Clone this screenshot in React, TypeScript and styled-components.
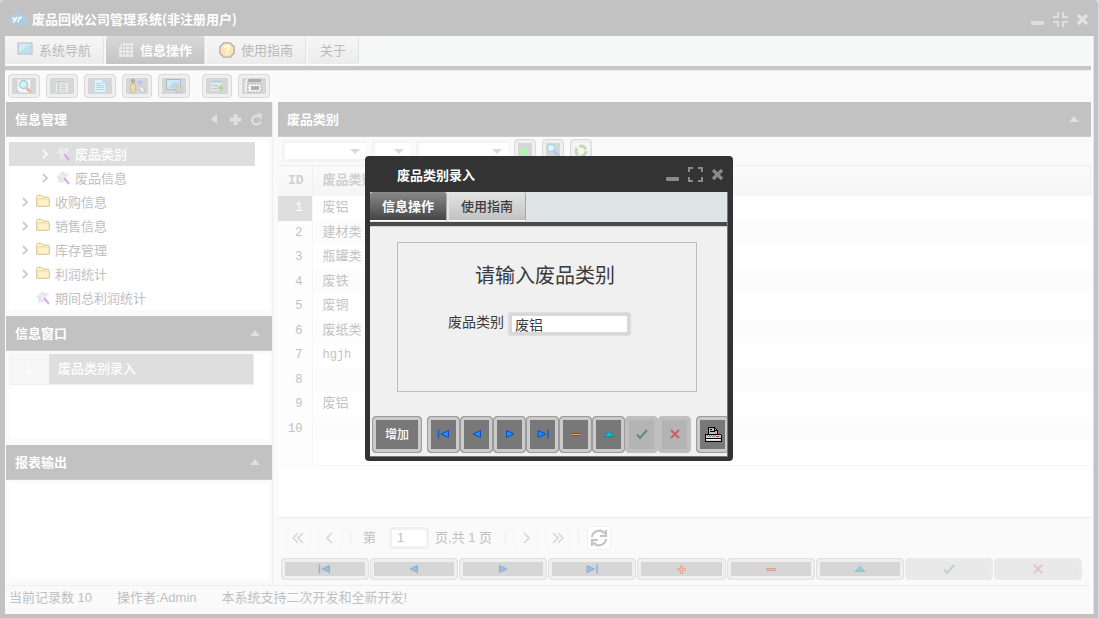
import React from "react";
import styled, { createGlobalStyle, css } from "styled-components";

const uiFont = `"Liberation Sans", "Noto Sans CJK SC", sans-serif`;
const cjkFont = `"Noto Sans CJK SC", sans-serif`;
const gridFont = `"Liberation Mono", "Noto Sans CJK SC", monospace`;

const GlobalStyle = createGlobalStyle`
  * { box-sizing: border-box; }
  body { margin: 0; background: #d3dcea; font: 13px/20px ${uiFont}; color: #c0c0c0; }
  button, input, select { font: inherit; color: inherit; margin: 0; }
  button { cursor: pointer; }
  svg { display: block; flex: none; }
`;

/* ---------- application window ---------- */

const Window = styled.div`
  position: relative;
  display: flex;
  flex-direction: column;
  min-height: 100vh;
  margin-right: 1px;
  padding: 0 4px 4px 5px;
  background: #c2c2c2;
  border-radius: 5px 5px 0 0;
`;

const TitleBar = styled.header`
  display: flex;
  align-items: center;
  height: 36px;
  padding: 2px 5px 0 4px;
  gap: 5px;
`;

const AppTitle = styled.h1`
  flex: 1;
  margin: 0;
  font: bold 13px/20px ${cjkFont};
  color: #fff;
`;

const WindowTools = styled.div`
  display: flex;
  align-items: center;
  gap: 8px;
`;

const ToolButton = styled.button`
  display: flex;
  padding: 0;
  border: 0;
  background: none;
`;

const Client = styled.div`
  flex: 1;
  display: flex;
  flex-direction: column;
  padding-right: 2px;
  border-right: 1px solid #e4e4e4;
  background: #fafafa;
`;

const TabBar = styled.nav<{ $modal?: boolean }>`
  display: flex;
  gap: 2px;
  height: 34px;
  background: ${(p) => (p.$modal ? "#dfe5e5" : "#f5f8f7")};
  border-bottom: 4px solid ${(p) => (p.$modal ? "#4a4a4a" : "#c7c7c7")};
  box-shadow: 0 1px 0 ${(p) => (p.$modal ? "#cfcfcf" : "#ededed")};
`;

const Tab = styled.button<{ $active?: boolean; $modal?: boolean }>`
  display: flex;
  align-items: center;
  gap: 6px;
  height: 29px;
  padding: 0 12px;
  border: 0;
  border-right: 1px solid ${(p) => (p.$modal ? "#a8a8a8" : "#e2e2e2")};
  border-bottom: 1px solid #fff;
  border-radius: 3px 3px 0 0;
  font: ${(p) => (p.$active ? "bold" : p.$modal ? "500" : "normal")} 13px/20px ${cjkFont};
  ${(p) =>
    p.$modal
      ? p.$active
        ? css`background: linear-gradient(#8a8a8a, #454545); color: #fff;`
        : css`background: linear-gradient(#e4e4e4, #c2c2c2); color: #3c3c3c;`
      : p.$active
        ? css`background: linear-gradient(#d8d8d8, #c4c4c4); color: #fff;`
        : css`background: linear-gradient(#f6f6f6, #ececec); color: #b9b9b9;`}
`;

const ToolBar = styled.div`
  display: flex;
  gap: 12px;
  height: 32px;
  padding: 4px 3px;
`;

const ToolGroup = styled.div`
  display: flex;
  gap: 6px;
`;

/* Grey push button: pale outer ring, darker face */
const PushButton = styled.button<{ $narrow?: boolean }>`
  display: flex;
  align-items: center;
  justify-content: center;
  width: ${(p) => (p.$narrow ? 30 : 32)}px;
  height: 24px;
  padding: 0;
  border: 1px solid #dadada;
  border-radius: 4px;
  background: #d6d6d6;
  box-shadow: inset 0 0 0 3px #efefef;
`;

/* ---------- panels ---------- */

const Workspace = styled.div`
  flex: 1;
  display: grid;
  grid-template-columns: 268px minmax(0, 1fr);
  gap: 5px;
  border-bottom: 1px solid #eeeeee;
`;

const Sidebar = styled.aside`
  display: flex;
  flex-direction: column;
  padding-left: 1px;
  border-right: 1px solid #efefef;
`;

const Panel = styled.section<{ $grow?: boolean }>`
  display: flex;
  flex-direction: column;
  flex: ${(p) => (p.$grow ? "1" : "none")};
`;

const PanelHeader = styled.div`
  display: flex;
  align-items: center;
  height: 35px;
  padding: 0 9px;
  gap: 8px;
  background: #c2c2c2;
  border-bottom: 1px solid #cdcdcd;
`;

const PanelTitle = styled.h2`
  flex: 1;
  margin: 0;
  font: bold 13px/20px ${cjkFont};
  color: #fff;
`;

const PanelBody = styled.div<{ $height?: number }>`
  flex: 1 0 auto;
  min-height: ${(p) => p.$height ?? 0}px;
  margin: 3px 3px 6px;
  background: #fff;
`;

const Tree = styled.ul`
  margin: 0;
  padding: 2px 14px 0 0;
  list-style: none;
`;

const TreeRow = styled.li<{ $level: number; $selected?: boolean }>`
  display: flex;
  align-items: center;
  gap: 4px;
  height: 24px;
  padding-left: ${(p) => 12 + p.$level * 20}px;
  font: ${(p) => (p.$selected ? "500" : "normal")} 13px/24px ${cjkFont};
  background: ${(p) => (p.$selected ? "#dedede" : "transparent")};
  color: ${(p) => (p.$selected ? "#fff" : "#c0c0c0")};
`;

const Twisty = styled.span`
  display: flex;
  width: 10px;
`;

const WindowRow = styled.div`
  display: grid;
  grid-template-columns: 40px 1fr;
  height: 31px;
  margin-right: 15px;
  line-height: 28px;
  color: #fff;
  background: #dedede;
  border-right: 1px solid #efefef;
  border-bottom: 1px solid #f0f0f0;
  font-family: ${cjkFont};
  font-weight: 500;
`;

const WindowIndex = styled.span`
  background: #f6f6f6;
  text-align: center;
`;

const WindowName = styled.span`
  padding-left: 9px;
`;

/* ---------- record grid ---------- */

const FilterBar = styled.div`
  display: flex;
  align-items: center;
  gap: 6px;
  height: 28px;
  padding: 0 4px;
`;

const Combo = styled.label<{ $width: number }>`
  position: relative;
  width: ${(p) => p.$width}px;
  height: 22px;
  svg { position: absolute; right: 6px; top: 9px; }
`;

const ComboSelect = styled.select`
  appearance: none;
  width: 100%;
  height: 22px;
  border: 3px solid #f4f4f4;
  border-right: 0;
  border-radius: 2px;
  background: #fff;
`;

const FilterButton = styled(PushButton)`
  width: 22px;
`;

const TableArea = styled.div`
  flex: 1;
  background: #fff;
  border-bottom: 1px solid #ebebeb;
`;

const Table = styled.table`
  width: 100%;
  border-collapse: collapse;
  table-layout: fixed;
  font: 13px/20px ${gridFont};
  color: #c3c3c3;
`;

const HeadCell = styled.th<{ $width?: number }>`
  width: ${(p) => (p.$width ? p.$width + "px" : "auto")};
  height: 30px;
  padding: 0 10px;
  text-align: left;
  font-weight: bold;
  color: #d0d0d0;
  background: linear-gradient(#fbfbfb, #f5f5f5);
  border-right: 1px solid #f0f0f0;
  border-top: 1px solid #f0f0f0;
`;

const Row = styled.tr`
  height: 25px;
  &:nth-child(even) { height: 24px; background: #fcfcfc; }
  &:last-child { border-bottom: 1px solid #f8f8f8; }
`;

const Cell = styled.td<{ $latin?: boolean }>`
  padding: 0 10px;
  font-size: ${(p) => (p.$latin ? 12 : 13)}px;
`;

const IndexCell = styled.td<{ $selected?: boolean }>`
  padding: 0 9px 0 0;
  font-size: 12px;
  text-align: right;
  border-right: 1px solid #f6f6f6;
  background: ${(p) => (p.$selected ? "#dedede" : "#fdfdfd")};
  color: ${(p) => (p.$selected ? "#fff" : "#c0c0c0")};
`;

const Pager = styled.div`
  display: flex;
  align-items: center;
  height: 39px;
  padding-left: 8px;
  font: 13px/20px ${uiFont};
`;

const PagerButton = styled.button<{ $lit?: boolean }>`
  display: flex;
  align-items: center;
  justify-content: center;
  width: 24px;
  height: 24px;
  margin-right: 8px;
  padding: 0;
  border: 1px solid ${(p) => (p.$lit ? "#f0f0f0" : "#f5f6f5")};
  border-radius: 3px;
  background: ${(p) => (p.$lit ? "#fff" : "#f9faf9")};
`;

const Separator = styled.span`
  width: 1px;
  height: 14px;
  margin-right: 8px;
  background: #ededed;
`;

const PagerText = styled.label<{ $left: number }>`
  margin-left: ${(p) => p.$left}px;
  margin-right: 13px;
  white-space: nowrap;
`;

const PageInput = styled.input`
  width: 40px;
  height: 22px;
  padding: 0 5px;
  border: 3px solid #f1f1f1;
  border-radius: 3px;
  background: #fff;
  outline: 0;
`;

const NavBar = styled.div`
  display: grid;
  grid-template-columns: repeat(9, 1fr);
  gap: 1px;
  height: 28px;
  padding: 1px 9px 5px 3px;
`;

const NavButton = styled.button<{ $off?: boolean }>`
  display: flex;
  align-items: center;
  justify-content: center;
  padding: 0;
  border: 1px solid ${(p) => (p.$off ? "#eaeaea" : "#e0e0e0")};
  border-radius: 4px;
  background: ${(p) => (p.$off ? "#e8e8e8" : "#d6d6d6")};
  box-shadow: inset 0 0 0 3px ${(p) => (p.$off ? "#eaeaea" : "#efefef")};
  svg { opacity: ${(p) => (p.$off ? 0.2 : 0.32)}; }
`;

const StatusBar = styled.footer`
  display: flex;
  gap: 25px;
  height: 28px;
  padding: 2px 4px;
  font: 13px/20px ${uiFont};
`;

/* ---------- dialog ---------- */

const Overlay = styled.div`
  position: absolute;
  inset: 0;
  display: flex;
  align-items: center;
  justify-content: center;
  padding-bottom: 2px;
`;

const Dialog = styled.div`
  width: 368px;
  padding: 0 5px 4px;
  border-radius: 4px;
  background: #333;
  color: #3a3a3a;
`;

const DialogTitleBar = styled.div`
  display: flex;
  align-items: center;
  height: 36px;
  padding: 2px 4px 0 27px;
`;

const DialogBody = styled.div`
  overflow: hidden;
  background: #f0f0f0;
  border-right: 1px solid #777;
  border-bottom: 1px solid #777;
`;

const EntryBox = styled.form`
  display: flex;
  flex-direction: column;
  align-items: center;
  height: 150px;
  margin: 16px 30px 24px 27px;
  padding-top: 17px;
  border: 1px solid #bcbcbc;
`;

const EntryTitle = styled.h3`
  margin: 0 4px 23px 0;
  font: normal 20px/30px ${cjkFont};
`;

const EntryField = styled.label`
  display: flex;
  gap: 5px;
  margin-right: 16px;
  font: 14px/16px ${cjkFont};
`;

const EntryInput = styled.input`
  width: 121px;
  height: 22px;
  padding: 0 3px;
  border: 3px solid #d8d8d8;
  border-radius: 2px;
  background: #fff;
  box-shadow: 0 0 2px #b0b0b0;
  outline: 0;
`;

const DialogNav = styled.div`
  display: flex;
  height: 40px;
  padding: 0 2px 3px;
`;

const DialogButton = styled.button<{ $width?: number; $off?: boolean; $space?: boolean }>`
  flex: none;
  display: flex;
  align-items: center;
  justify-content: center;
  width: ${(p) => p.$width ?? 33}px;
  height: 37px;
  margin-right: ${(p) => (p.$space ? 5 : 0)}px;
  padding: 0;
  border: 1px solid ${(p) => (p.$off ? "#c0c0c0" : "#9b9b9b")};
  border-radius: 4px;
  background: ${(p) => (p.$off ? "#b4b4b4" : "#787878")};
  box-shadow: inset 0 0 0 3px ${(p) => (p.$off ? "#bfbfbf" : "#cbcbcb")};
  font: 500 12px/20px ${cjkFont};
  color: #fff;
  svg { opacity: ${(p) => (p.$off ? 0.65 : 1)}; }
`;

/* ---------- icons ---------- */

const CloudLogo = () => (
  <svg width="18" height="16" viewBox="0 0 18 16">
    <path d="M4 14a4 4 0 0 1-1-7.500A5.500 5.500 0 0 1 13 4.500a4.700 4.700 0 0 1 1 9.500z" fill="#a9cfe0" />
    <path d="M3.500 6.500l2.300 2.800M8 6l-3.500 5.500M9 11l1.500-4.500h2.500" fill="none" stroke="#fff" strokeWidth="1.600" />
  </svg>
);

const Minimize = ({ color }: { color: string }) => (
  <svg width="14" height="14"><rect x="0" y="9" width="13" height="4" rx="1" fill={color} /></svg>
);

const Corners = ({ color, restore }: { color: string; restore?: boolean }) => (
  <svg width="15" height="15" fill="none" stroke={color} strokeWidth="2">
    {restore ? (
      <path d="M0 5h5V0M10 0v5h5M0 10h5v5M10 15v-5h5" />
    ) : (
      <path d="M5 1H1v4M10 1h4v4M1 10v4h4M14 10v4h-4" />
    )}
  </svg>
);

const Close = ({ color }: { color: string }) => (
  <svg width="13" height="13"><path d="M2 2l9 9M11 2l-9 9" stroke={color} strokeWidth="3.200" /></svg>
);

const UpTriangle = () => (
  <svg width="16" height="6"><path d="M3 6l5-6 5 6z" fill="#dfdfdf" /></svg>
);

const DownTriangle = () => (
  <svg width="10" height="5"><path d="M0 0h10L5 5z" fill="#dadada" /></svg>
);

const ScreenIcon = () => (
  <svg width="16" height="16">
    <rect x="1" y="1" width="14" height="11" fill="#d3ebf5" stroke="#b3bcc2" strokeWidth="1" />
    <path d="M2 11L11 3h3v8z" fill="#c0e0ee" />
  </svg>
);

const GridIcon = () => (
  <svg width="16" height="16" shapeRendering="crispEdges">
    <path d="M4 1h11v14H1V4z" fill="#ececec" />
    <path d="M1 4.500h14M1 7.500h14M1 11.500h14M4.500 1v14M7.500 1v14M11.500 1v14" stroke="#d2d2d2" />
  </svg>
);

const HelpIcon = () => (
  <svg width="16" height="16" viewBox="0 0 18 18">
    <path d="M5.500 1h7L17 5.500v7L12.500 17h-7L1 12.500v-7z" fill="#fbe5ae" stroke="#bda9a9" strokeWidth="1.500" />
    <path d="M6.500 7q0-2.500 2.500-2.500t2.500 2.200q0 1.300-2.500 2.600v1.500" fill="none" stroke="#fff" strokeWidth="2" />
    <circle cx="9" cy="13.500" r="1.200" fill="#fff" />
  </svg>
);

const PreviewIcon = () => (
  <svg width="22" height="16">
    <path d="M4 1h14v14H7l-3-3z" fill="#f4f4f4" stroke="#cfcfcf" />
    <circle cx="10.500" cy="6.500" r="4" fill="#d6f1fb" stroke="#a8cddd" strokeWidth="1.400" />
    <path d="M13.500 10l4 4" stroke="#e4b8a2" strokeWidth="3" />
  </svg>
);

const ListIcon = () => (
  <svg width="16" height="16">
    <rect x="2" y="2" width="12" height="12" fill="#ececec" />
    <path d="M2 3.500h12M4.500 4v10" stroke="#c4cdd2" strokeWidth="2" />
    <path d="M7 6.500h5M7 8.500h5M7 10.500h5M7 12.500h5" stroke="#c6cbce" />
  </svg>
);

const PageIcon = () => (
  <svg width="16" height="16">
    <path d="M2.500 1.500h8l3 3v10h-11z" fill="#e3f3fb" stroke="#c3dbe6" />
    <path d="M4 5.500h6M4 7.500h8M4 9.500h8M4 11.500h8" stroke="#b2d5e6" />
    <path d="M10 1v4h4" fill="#bfdced" />
  </svg>
);

const UserIcon = () => (
  <svg width="18" height="16">
    <circle cx="5" cy="3" r="2.200" fill="#b4aca2" />
    <path d="M2.500 6h5v5H7v4H3v-4h-.500z" fill="#efdba9" stroke="#c9bb9c" strokeWidth=".8" />
    <rect x="9" y="2" width="6" height="5" fill="#c0c0ee" stroke="#dadada" />
    <path d="M9 9h6l2 5h-4l-1-3H8z" fill="#f0f0f0" stroke="#bcbcbc" strokeWidth=".7" />
  </svg>
);

const MonitorIcon = () => (
  <svg width="18" height="16">
    <rect x="1.500" y="1.500" width="14" height="10" fill="#d0e8f2" stroke="#b0babf" />
    <path d="M3 10L9 4h5v6z" fill="#b9dcec" />
    <circle cx="14" cy="11.500" r="3.500" fill="#c9dcbb" stroke="#c9bada" />
    <path d="M12 12l2-3 2 3z" fill="#ebcfa8" />
  </svg>
);

const AddFormIcon = () => (
  <svg width="16" height="16">
    <rect x="2" y="2.500" width="10" height="10" fill="#ececec" />
    <path d="M2 3.500h10" stroke="#b4d3e2" strokeWidth="2.500" />
    <path d="M3 7.500h6M3 10.500h5" stroke="#c6c6c6" strokeWidth="1.500" />
    <path d="M11.500 7v6M8.500 10h6" stroke="#a9d9a0" strokeWidth="2" />
  </svg>
);

const WindowsIcon = () => (
  <svg width="20" height="16">
    <path d="M3 1h14v3H3z" fill="#adadad" />
    <path d="M2 14V4l2-3" fill="none" stroke="#f6f6f6" strokeWidth="1.500" />
    <rect x="4" y="6" width="13" height="8" fill="#f6f6f6" stroke="#adadad" strokeDasharray="2 1" />
    <rect x="7" y="8" width="8" height="4" fill="#b0b0b0" />
  </svg>
);

const Chevron = ({ color }: { color: string }) => (
  <svg width="8" height="10" fill="none"><path d="M2 1l4 4-4 4" stroke={color} strokeWidth="1.700" /></svg>
);

const LeafIcon = () => (
  <svg width="16" height="16">
    <path d="M1 7l4-4 2-2 3 2 2-1 2 3-2 1-3 6-4 1-1-4z" fill="#ededed" />
    <path d="M3 6l5 6M7 3l4 3M4 8v5" stroke="#dadada" />
    <path d="M9 8l5 6" stroke="#d6aaf1" strokeWidth="2" />
  </svg>
);

const FolderIcon = () => (
  <svg width="16" height="16">
    <path d="M1.500 12.500V3l1-1.500h4L8 3h5.500v1.500l1 .500v7l-1 .500h-11z" fill="#fcefbd" stroke="#d9cba6" />
    <path d="M3 5h11v7H3z" fill="#fff2c8" stroke="#e4d4a5" strokeWidth=".7" />
  </svg>
);

type NavKind = "first" | "prev" | "next" | "last" | "add" | "remove" | "edit" | "check" | "cancel";

const NavGlyph = ({ kind }: { kind: NavKind }) => {
  const blue = { fill: "#1c8dff", stroke: "#0a50c4", strokeWidth: 1 };
  return (
    <svg width="14" height="12">
      {kind === "first" && (<><path d="M1.500 1.500v9" stroke="#0b5fd8" strokeWidth="1.500" /><path d="M11.500 2.500v7L4 6z" {...blue} /></>)}
      {kind === "prev" && <path d="M10.500 2.500v7L3 6z" {...blue} />}
      {kind === "next" && <path d="M3.500 2.500v7L11 6z" {...blue} />}
      {kind === "last" && (<><path d="M2 2.500v7L9.500 6z" {...blue} /><path d="M12 1.500v9" stroke="#0b5fd8" strokeWidth="1.500" /></>)}
      {kind === "add" && (
        <g shapeRendering="crispEdges">
          <path d="M6 2h3v3h3v3H9v3H6V8H3V5h3z" fill="#ff4f1a" />
          <path d="M7 2h1v9H7zM3 6h9v1H3z" fill="#ffb27a" />
        </g>
      )}
      {kind === "remove" && (
        <g shapeRendering="crispEdges">
          <rect x="2" y="5" width="10" height="3" fill="#e12d00" />
          <rect x="2" y="6" width="10" height="1" fill="#ffa05a" />
        </g>
      )}
      {kind === "edit" && <path d="M2 8.500L7 3.500l5 5z" fill="#12bdd0" stroke="#0a8a9d" />}
      {kind === "check" && <path d="M2 6.500l3 3.500 7-8" fill="none" stroke="#23834a" strokeWidth="2" />}
      {kind === "cancel" && <path d="M3 2l8 8M11 2l-8 8" stroke="#d9352b" strokeWidth="1.800" />}
    </svg>
  );
};

const PrinterIcon = () => (
  <svg width="18" height="18" shapeRendering="crispEdges">
    <path d="M4 8V2h6l3 3v4H4z" fill="#b9b9b9" stroke="#000" />
    <path d="M6 4.500h2M6 6.500h5M10 2v3h3" fill="none" stroke="#000" />
    <path d="M2 9h14l1 1v6H1v-6z" fill="#d6d6d6" stroke="#000" />
    <path d="M1 13.500h16" stroke="#000" />
    <path d="M2 14h14v1H2z" fill="#fff" />
    <path d="M3 10.500h9M4 11.500h9" stroke="#777" strokeDasharray="1 1" />
    <rect x="13" y="11" width="2" height="1" fill="#e00" />
  </svg>
);

const PagerGlyph = ({ d }: { d: string }) => (
  <svg width="14" height="14" fill="none"><path d={d} stroke="#d8d8d8" strokeWidth="1.700" /></svg>
);

const RefreshIcon = () => (
  <svg width="18" height="18" fill="none" stroke="#c4c4c4" strokeWidth="2.200">
    <path d="M2 8a7 7 0 0 1 12.500-3.500M16 1v6h-6M16 10A7 7 0 0 1 3.500 13.500M2 17v-6h6" />
  </svg>
);

/* ---------- data ---------- */

const categories = ["废铝", "建材类", "瓶罐类", "废铁", "废铜", "废纸类", "hgjh", "", "废铝", ""];
const folders = ["收购信息", "销售信息", "库存管理", "利润统计"];
const navKinds: NavKind[] = ["first", "prev", "next", "last", "add", "remove", "edit", "check", "cancel"];
const navLabels: Record<NavKind, string> = {
  first: "首条", prev: "上一条", next: "下一条", last: "末条", add: "新增",
  remove: "删除", edit: "编辑", check: "保存", cancel: "取消",
};
const isOff = (kind: NavKind) => kind === "check" || kind === "cancel";

const CollapsiblePanel = ({ title, height, grow, children }: {
  title: string; height?: number; grow?: boolean; children?: React.ReactNode;
}) => (
  <Panel $grow={grow}>
    <PanelHeader>
      <PanelTitle>{title}</PanelTitle>
      <ToolButton aria-label="折叠"><UpTriangle /></ToolButton>
    </PanelHeader>
    <PanelBody $height={height}>{children}</PanelBody>
  </Panel>
);

const FilterCombo = ({ label, width }: { label: string; width: number }) => (
  <Combo $width={width}>
    <ComboSelect aria-label={label} defaultValue="" />
    <DownTriangle />
  </Combo>
);

export default function App() {
  return (
    <>
      <GlobalStyle />
      <Window>
        <TitleBar>
          <CloudLogo />
          <AppTitle>废品回收公司管理系统(非注册用户)</AppTitle>
          <WindowTools>
            <ToolButton aria-label="最小化"><Minimize color="#dedede" /></ToolButton>
            <ToolButton aria-label="还原"><Corners color="#dedede" restore /></ToolButton>
            <ToolButton aria-label="关闭"><Close color="#e2e2e2" /></ToolButton>
          </WindowTools>
        </TitleBar>

        <Client>
          <TabBar>
            <Tab><ScreenIcon />系统导航</Tab>
            <Tab $active><GridIcon />信息操作</Tab>
            <Tab><HelpIcon />使用指南</Tab>
            <Tab>关于</Tab>
          </TabBar>

          <ToolBar>
            <ToolGroup>
              <PushButton aria-label="查询"><PreviewIcon /></PushButton>
              <PushButton aria-label="列表"><ListIcon /></PushButton>
              <PushButton aria-label="文档"><PageIcon /></PushButton>
              <PushButton aria-label="用户" $narrow><UserIcon /></PushButton>
              <PushButton aria-label="屏幕"><MonitorIcon /></PushButton>
            </ToolGroup>
            <ToolGroup>
              <PushButton aria-label="添加" $narrow><AddFormIcon /></PushButton>
              <PushButton aria-label="窗口"><WindowsIcon /></PushButton>
            </ToolGroup>
          </ToolBar>

          <Workspace>
            <Sidebar>
              <Panel>
                <PanelHeader>
                  <PanelTitle>信息管理</PanelTitle>
                  <ToolButton aria-label="收起"><svg width="14" height="12"><path d="M10 1v10L4 6z" fill="#dfdfdf" /></svg></ToolButton>
                  <ToolButton aria-label="展开"><svg width="13" height="13"><path d="M6.500 1v11M1 6.500h11" stroke="#dfdfdf" strokeWidth="4" /></svg></ToolButton>
                  <ToolButton aria-label="刷新">
                    <svg width="13" height="13"><path d="M10.500 8.500A4.300 4.300 0 1 1 8.500 3.500" fill="none" stroke="#dfdfdf" strokeWidth="2.200" /><path d="M7 0l5 1-1 6z" fill="#dfdfdf" /></svg>
                  </ToolButton>
                </PanelHeader>
                <PanelBody $height={170}>
                  <Tree>
                    <TreeRow $level={1} $selected><Twisty><Chevron color="#fff" /></Twisty><LeafIcon />废品类别</TreeRow>
                    <TreeRow $level={1}><Twisty><Chevron color="#c4c4c4" /></Twisty><LeafIcon />废品信息</TreeRow>
                    {folders.map((name) => (
                      <TreeRow key={name} $level={0}><Twisty><Chevron color="#c4c4c4" /></Twisty><FolderIcon />{name}</TreeRow>
                    ))}
                    <TreeRow $level={0}><Twisty /><LeafIcon />期间总利润统计</TreeRow>
                  </Tree>
                </PanelBody>
              </Panel>
              <CollapsiblePanel title="信息窗口" height={85}>
                <WindowRow>
                  <WindowIndex>1</WindowIndex>
                  <WindowName>废品类别录入</WindowName>
                </WindowRow>
              </CollapsiblePanel>
              <CollapsiblePanel title="报表输出" grow />
            </Sidebar>

            <Panel as="main">
              <PanelHeader>
                <PanelTitle>废品类别</PanelTitle>
                <ToolButton aria-label="折叠"><UpTriangle /></ToolButton>
              </PanelHeader>
              <FilterBar>
                <FilterCombo label="字段" width={84} />
                <FilterCombo label="条件" width={38} />
                <FilterCombo label="取值" width={92} />
                <FilterButton aria-label="执行"><svg width="14" height="14"><path d="M3 1l8 6-8 6z" fill="#a9fba5" /></svg></FilterButton>
                <FilterButton aria-label="查找">
                  <svg width="16" height="16"><circle cx="6" cy="5" r="3.500" fill="#e3f8ff" stroke="#acd8ee" strokeWidth="1.500" /><path d="M9 8l5 5" stroke="#a9c4e9" strokeWidth="2" /></svg>
                </FilterButton>
                <FilterButton aria-label="刷新">
                  <svg width="16" height="16"><rect width="16" height="16" fill="#f6f6f6" /><circle cx="8" cy="8" r="5" fill="none" stroke="#c6d9b4" strokeWidth="3" strokeDasharray="8 2.500" /></svg>
                </FilterButton>
              </FilterBar>
              <TableArea>
                <Table>
                  <thead>
                    <tr>
                      <HeadCell $width={34}>ID</HeadCell>
                      <HeadCell>废品类别</HeadCell>
                    </tr>
                  </thead>
                  <tbody>
                    {categories.map((name, i) => (
                      <Row key={i}>
                        <IndexCell $selected={i === 0}>{i + 1}</IndexCell>
                        <Cell $latin={/^[a-z]+$/.test(name)}>{name}</Cell>
                      </Row>
                    ))}
                    <Row><IndexCell /><Cell /></Row>
                  </tbody>
                </Table>
              </TableArea>
              <Pager>
                <PagerButton aria-label="第一页"><PagerGlyph d="M7 2L2 7l5 5M12 2L7 7l5 5" /></PagerButton>
                <PagerButton aria-label="上一页"><PagerGlyph d="M9 2L4 7l5 5" /></PagerButton>
                <Separator />
                <PagerText htmlFor="page" $left={4}>第</PagerText>
                <PageInput id="page" defaultValue="1" />
                <PagerText as="span" $left={6}>页,共 1 页</PagerText>
                <Separator />
                <PagerButton aria-label="下一页"><PagerGlyph d="M5 2l5 5-5 5" /></PagerButton>
                <PagerButton aria-label="最后一页"><PagerGlyph d="M2 2l5 5-5 5M7 2l5 5-5 5" /></PagerButton>
                <Separator />
                <PagerButton aria-label="刷新" $lit><RefreshIcon /></PagerButton>
              </Pager>
              <NavBar>
                {navKinds.map((kind) => (
                  <NavButton key={kind} aria-label={navLabels[kind]} $off={isOff(kind)}><NavGlyph kind={kind} /></NavButton>
                ))}
              </NavBar>
            </Panel>
          </Workspace>

          <StatusBar>
            <span>当前记录数 10</span>
            <span>操作者:Admin</span>
            <span>本系统支持二次开发和全新开发!</span>
          </StatusBar>
        </Client>

        <Overlay>
          <Dialog role="dialog" aria-label="废品类别录入">
            <DialogTitleBar>
              <PanelTitle>废品类别录入</PanelTitle>
              <WindowTools>
                <ToolButton aria-label="最小化"><Minimize color="#8a8a8a" /></ToolButton>
                <ToolButton aria-label="最大化"><Corners color="#8a8a8a" /></ToolButton>
                <ToolButton aria-label="关闭"><Close color="#8a8a8a" /></ToolButton>
              </WindowTools>
            </DialogTitleBar>
            <DialogBody>
              <TabBar $modal>
                <Tab $modal $active>信息操作</Tab>
                <Tab $modal>使用指南</Tab>
              </TabBar>
              <EntryBox onSubmit={(e) => e.preventDefault()}>
                <EntryTitle>请输入废品类别</EntryTitle>
                <EntryField>
                  废品类别
                  <EntryInput defaultValue="废铝" />
                </EntryField>
              </EntryBox>
              <DialogNav>
                <DialogButton $width={50} $space>增加</DialogButton>
                {navKinds.filter((kind) => kind !== "add").map((kind) => (
                  <DialogButton key={kind} aria-label={navLabels[kind]} $off={isOff(kind)} $space={kind === "cancel"}>
                    <NavGlyph kind={kind} />
                  </DialogButton>
                ))}
                <DialogButton aria-label="打印"><PrinterIcon /></DialogButton>
              </DialogNav>
            </DialogBody>
          </Dialog>
        </Overlay>
      </Window>
    </>
  );
}
